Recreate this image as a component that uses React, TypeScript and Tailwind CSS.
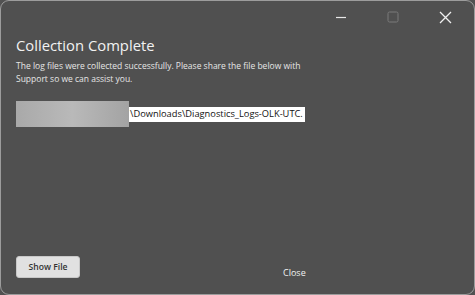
import React from 'react';

const font = { fontFamily: '"Open Sans", "Noto Sans", sans-serif' };

const TitleBar: React.FC = () => (
  <div className="flex h-[32px] items-center justify-end pr-[3px]">
    <div className="flex w-[52px] justify-center">
      <svg width="12" height="12" viewBox="0 0 12 12">
        <path d="M1 6.5h10" stroke="#e8e8e8" strokeWidth="1.2" />
      </svg>
    </div>
    <div className="flex w-[52px] justify-center">
      <svg width="12" height="12" viewBox="0 0 12 12">
        <rect x="1" y="1" width="10" height="10" rx="1.5" fill="none" stroke="#7a7a7a" strokeWidth="1" />
      </svg>
    </div>
    <div className="flex w-[52px] justify-center">
      <svg width="13" height="13" viewBox="0 0 13 13">
        <path d="M1 1l11 11M12 1L1 12" stroke="#f0f0f0" strokeWidth="1.3" />
      </svg>
    </div>
  </div>
);

export default function App() {
  return (
    <div className="h-[295px] w-[475px] bg-[#525252]" style={font}>
      <div className="flex h-full w-full flex-col rounded-[9px] border border-[#9c9c9c] bg-[#505050]">
        <TitleBar />
        <div className="flex flex-1 flex-col px-[15px]">
          <h1 className="mt-[2px] text-[14.8px] leading-[20px] text-[#f2f2f2]">Collection Complete</h1>
          <p className="mt-[4px] whitespace-nowrap text-[8.5px] leading-[13px] text-[#e6e6e6]">
            The log files were collected successfully. Please share the file below with
            <br />
            Support so we can assist you.
          </p>
          <div className="mt-[16px] flex items-center">
            <div className="h-[26px] w-[113px] bg-gradient-to-r from-[#a9a9a9] via-[#b9b9b9] to-[#a3a3a3]" />
            <div className="flex h-[15px] w-[176px] items-center whitespace-nowrap bg-white pl-[1px] text-[9.3px] text-[#111]">
              \Downloads\Diagnostics_Logs-OLK-UTC.
            </div>
          </div>
          <div className="mt-auto mb-[16px] flex items-end">
            <button className="h-[22px] w-[64px] rounded-[3px] border border-[#c8c8c8] bg-[#e1e1e1] text-[8.6px] font-semibold text-[#333]">
              Show File
            </button>
            <span className="-mb-[1px] ml-[203px] text-[9px] text-[#f0f0f0]">Close</span>
          </div>
        </div>
      </div>
    </div>
  );
}
